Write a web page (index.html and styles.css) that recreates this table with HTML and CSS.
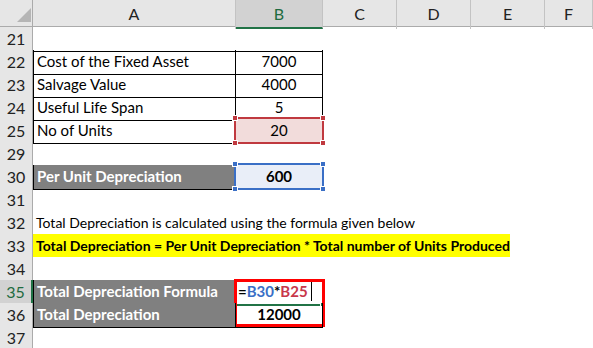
FILE: index.html
```html
<!DOCTYPE html>
<html lang="en">
<head>
  <meta charset="UTF-8" />
  <title>Per Unit Depreciation</title>
  <link rel="stylesheet" href="styles.css">
</head>
<body>
  <div class="sheet">
    <div class="row head">
      <div class="corner">
        <svg width="16" height="16" viewBox="0 0 16 16"><polygon points="15,1 15,15 1,15" fill="#b5b5b5"/></svg>
      </div>
      <div>A</div>
      <div class="on">B</div>
      <div>C</div>
      <div>D</div>
      <div>E</div>
      <div>F</div>
    </div>

    <div class="row">
      <div class="rh">21</div>
      <div class="c bb"></div><div class="c bb"></div>
    </div>
    <div class="row">
      <div class="rh">22</div>
      <div class="c bx bl">Cost of the Fixed Asset</div>
      <div class="c bx num">7000</div>
    </div>
    <div class="row">
      <div class="rh">23</div>
      <div class="c bx bl">Salvage Value</div>
      <div class="c bx num">4000</div>
    </div>
    <div class="row">
      <div class="rh">24</div>
      <div class="c bx bl">Useful Life Span</div>
      <div class="c bx num">5</div>
    </div>
    <div class="row">
      <div class="rh">25</div>
      <div class="c bx bl">No of Units</div>
      <div class="c bx num pink">20
        <div class="sel red"><i class="h tl"></i><i class="h tr"></i><i class="h bl2"></i><i class="h br"></i></div>
      </div>
    </div>
    <div class="row">
      <div class="rh">29</div>
      <div class="c bb"></div><div class="c bb"></div>
    </div>
    <div class="row">
      <div class="rh">30</div>
      <div class="c bx bl dark">Per Unit Depreciation</div>
      <div class="c bx num b blue">600
        <div class="sel navy"><i class="h tl"></i><i class="h tr"></i><i class="h bl2"></i><i class="h br"></i></div>
      </div>
    </div>
    <div class="row">
      <div class="rh">31</div>
    </div>
    <div class="row">
      <div class="rh">32</div>
      <div class="c wide">Total Depreciation is calculated using the formula given below</div>
    </div>
    <div class="row">
      <div class="rh">33</div>
      <div class="c wide"><span class="hl">Total Depreciation = Per Unit Depreciation * Total number of Units Produced</span></div>
    </div>
    <div class="row">
      <div class="rh">34</div>
      <div class="c bb"></div><div class="c bb"></div>
    </div>
    <div class="row">
      <div class="rh act">35</div>
      <div class="c bx bl dark">Total Depreciation Formula</div>
      <div class="c bx b edit">=<span class="ref1">B30</span>*<span class="ref2">B25</span><span class="caret"></span>
        <div class="editline"><i class="fill"></i></div>
        <div class="box"></div>
      </div>
    </div>
    <div class="row">
      <div class="rh">36</div>
      <div class="c bx bl dark">Total Depreciation</div>
      <div class="c bx num b">12000</div>
    </div>
    <div class="row">
      <div class="rh">37</div>
    </div>
  </div>
</body>
</html>
```

FILE: styles.css
```css
* {
  box-sizing: border-box;
  margin: 0;
  padding: 0;
}
body {
  font-family: Lato, "Liberation Sans", sans-serif;
  font-size: 15px;
  color: #000;
  background: #fff;
  width: 593px;
  height: 348px;
  overflow: hidden;
}

.row {
  display: grid;
  grid-template-columns: 33px 203px 87px 74px 74px 74px 48px;
  height: 23px;
}

/* column header */
.head {
  height: 27px;
  background: #e6e6e6;
  border-bottom: 1px solid #ababab;
}
.head div {
  border-right: 1px solid #c3c3c3;
  text-align: center;
  line-height: 27px;
  font-size: 16px;
  color: #222;
}
.head .corner {
  border-right: 1px solid #ababab;
  padding: 7px 0 0 15px;
  line-height: 0;
}
.head .on {
  background: #d2d2d2;
  color: #1e6b40;
  border-bottom: 2px solid #217346;
}

/* row header */
.rh {
  background: #e6e6e6;
  border-right: 1px solid #ababab;
  border-bottom: 1px solid #d4d4d4;
  text-align: center;
  line-height: 24px;
  font-size: 16px;
  color: #222;
}
.rh.act {
  background: #d2d2d2;
  color: #1e6b40;
  border-right: 2px solid #217346;
}

/* cells */
.c {
  position: relative;
  padding: 0 3px;
  line-height: 23px;
  white-space: nowrap;
}
.bb { border-bottom: 1px solid #000; }
.bx {
  border-right: 1px solid #000;
  border-bottom: 1px solid #000;
}
.bl { border-left: 1px solid #000; }
.num { text-align: center; }
.b { font-weight: 700; }
.dark {
  background: #808080;
  color: #fff;
  font-weight: 700;
}
.pink { background: #f2dcdb; }
.blue { background: #e9eef8; }

.wide {
  grid-column: 2 / 8;
  padding-left: 3px;
  font-size: 14px;
}
.hl {
  display: inline-block;
  background: #ffff00;
  font-weight: 700;
  margin-left: -3px;
  padding: 0 3px;
  width: 477px;
}

/* selections */
.sel {
  position: absolute;
  left: -2px;
  right: -2px;
  top: -2px;
  bottom: -1px;
  border: 2px solid;
}
.sel.red { border-color: #c0393f; }
.sel.navy { border-color: #3a6fc6; }
.sel .h {
  position: absolute;
  width: 6px;
  height: 6px;
  border: 1px solid #fff;
}
.sel.red .h { background: #c0393f; }
.sel.navy .h { background: #3a6fc6; }
.h.tl { left: -4px; top: -4px; }
.h.tr { right: -4px; top: -4px; }
.h.bl2 { left: -4px; bottom: -4px; }
.h.br { right: -4px; bottom: -4px; }

.edit { padding-left: 2px; }
.ref1 { color: #3a6fc6; }
.ref2 { color: #c8374a; }
.caret {
  display: inline-block;
  width: 1px;
  height: 19px;
  background: #000;
  margin-left: 3px;
  vertical-align: -4px;
}
.editline {
  position: absolute;
  left: 0;
  right: -3px;
  bottom: -2px;
  height: 2px;
  background: #217346;
}
.editline .fill {
  position: absolute;
  right: 0;
  top: -2px;
  width: 5px;
  height: 5px;
  background: #217346;
  border: 1px solid #fff;
}
.box {
  position: absolute;
  left: -2px;
  top: -1px;
  width: 91px;
  height: 48px;
  border: 3px solid #ff0000;
}
```
